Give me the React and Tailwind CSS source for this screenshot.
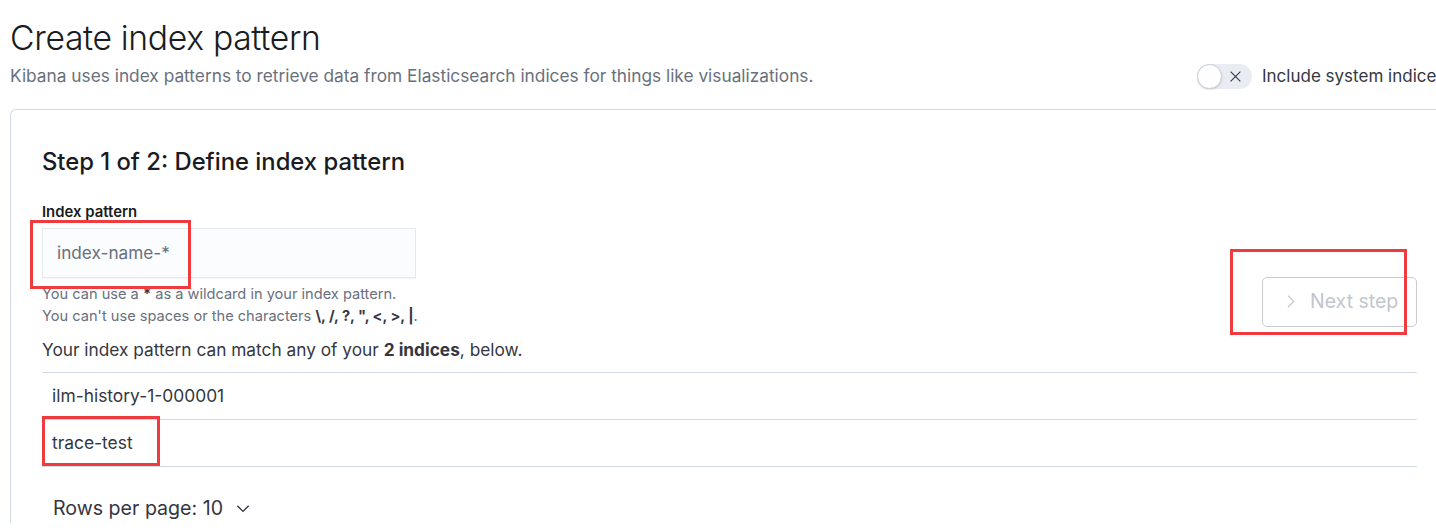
import React from "react";

function Chevron({ className }) {
  return (
    <svg viewBox="0 0 16 16" className={className} fill="none" stroke="currentColor" strokeWidth="1.1">
      <path d="M5.5 2.5 L11 8 L5.5 13.5" />
    </svg>
  );
}

export default function App() {
  return (
    <div
      className="relative w-[1436px] h-[531px] overflow-hidden bg-white text-[#343741]"
      style={{ fontFamily: "Inter, 'Noto Sans', sans-serif" }}
    >
      <div className="pl-[10px] pt-[17px] flex items-start">
        <div className="flex-1">
          <h1 className="text-[33.7px] leading-[42px] font-light text-[#1a1c21] tracking-[-0.01em]">
            Create index pattern
          </h1>
          <p className="text-[17.3px] leading-[24px] mt-[5px] text-[#69707d]">
            Kibana uses index patterns to retrieve data from Elasticsearch indices for things like visualizations.
          </p>
        </div>
        <div className="flex items-center mt-[47px] shrink-0 w-[239px] whitespace-nowrap overflow-hidden">
          <div className="relative w-[55px] h-[25px] rounded-full bg-[#e9edf3] shrink-0">
            <div className="absolute left-0 top-0 w-[25px] h-[25px] rounded-full bg-white border border-[#c9ced6] shadow-sm" />
            <svg viewBox="0 0 16 16" className="absolute left-[32px] top-[6px] w-[13px] h-[13px] text-[#343741]" stroke="currentColor" strokeWidth="1.4">
              <path d="M2 2 L14 14 M14 2 L2 14" />
            </svg>
          </div>
          <span className="ml-[10px] text-[17px] text-[#343741]">Include system indices</span>
        </div>
      </div>

      <div className="ml-[10px] mt-[19px] border-t border-l border-[#d3dae6] rounded-tl-[6px] pl-[31px] pr-[19px] pt-[37px]">
        <h2 className="text-[23.8px] leading-[30px] font-medium text-[#1a1c21]">Step 1 of 2: Define index pattern</h2>
        <div className="flex mt-[26px]">
          <div className="flex-1">
            <label className="block text-[14.9px] leading-[18px] font-semibold text-[#1a1c21]">Index pattern</label>
            <div className="mt-[7px] w-[374px] h-[50px] bg-[#fbfcfd] border border-[#e6e9ef] shadow-[0_1px_1px_rgba(0,0,0,0.04)] flex items-center pl-[14px]">
              <span className="text-[17.2px] text-[#69707d]">index-name-*</span>
            </div>
            <div className="mt-[5px] text-[14.6px] leading-[22px] text-[#69707d]">
              <div>You can use a <b className="font-bold text-[#343741]">*</b> as a wildcard in your index pattern.</div>
              <div>
                You can't use spaces or the characters{" "}
                <b className="font-bold text-[#343741]">\, /, ?, ", &lt;, &gt;, |</b>.
              </div>
            </div>
          </div>
          <div className="pt-[74px]">
            <div className="w-[155px] h-[50px] border border-[#c9ccd1] rounded-[5px] flex items-center pl-[19px] text-[#c2c6cd]">
              <Chevron className="w-[17px] h-[17px]" />
              <span className="ml-[11px] text-[19.5px]">Next step</span>
            </div>
          </div>
        </div>
        <p className="mt-[11px] text-[17.3px] leading-[24px] text-[#343741]">
          Your index pattern can match any of your <b className="font-bold">2 indices</b>, below.
        </p>
        <div className="mt-[10px] border-t border-[#d3dae6]">
          <div className="h-[47px] border-b border-[#d3dae6] flex items-center pl-[10px] pt-[1px] text-[17.4px] text-[#343741]">
            ilm-history-1-000001
          </div>
          <div className="h-[47px] border-b border-[#d3dae6] flex items-center pl-[10px] pt-[1px] text-[17.4px] text-[#343741]">
            trace-test
          </div>
        </div>
        <div className="mt-[27px] flex items-center pl-[11px] text-[19.6px] text-[#343741]">
          <span>Rows per page: 10</span>
          <svg viewBox="0 0 16 16" className="ml-[11px] w-[18px] h-[18px]" fill="none" stroke="currentColor" strokeWidth="1.2">
            <path d="M3 6 L8 11 L13 6" />
          </svg>
        </div>
      </div>

      <div className="absolute left-[30px] top-[220px] w-[161px] h-[69px] border-[3px] border-[#ef3b3e]" />
      <div className="absolute left-[1230px] top-[249px] w-[177px] h-[86px] border-[3px] border-[#ef3b3e]" />
      <div className="absolute left-[42px] top-[416px] w-[118px] h-[50px] border-[3px] border-[#ef3b3e]" />
    </div>
  );
}
